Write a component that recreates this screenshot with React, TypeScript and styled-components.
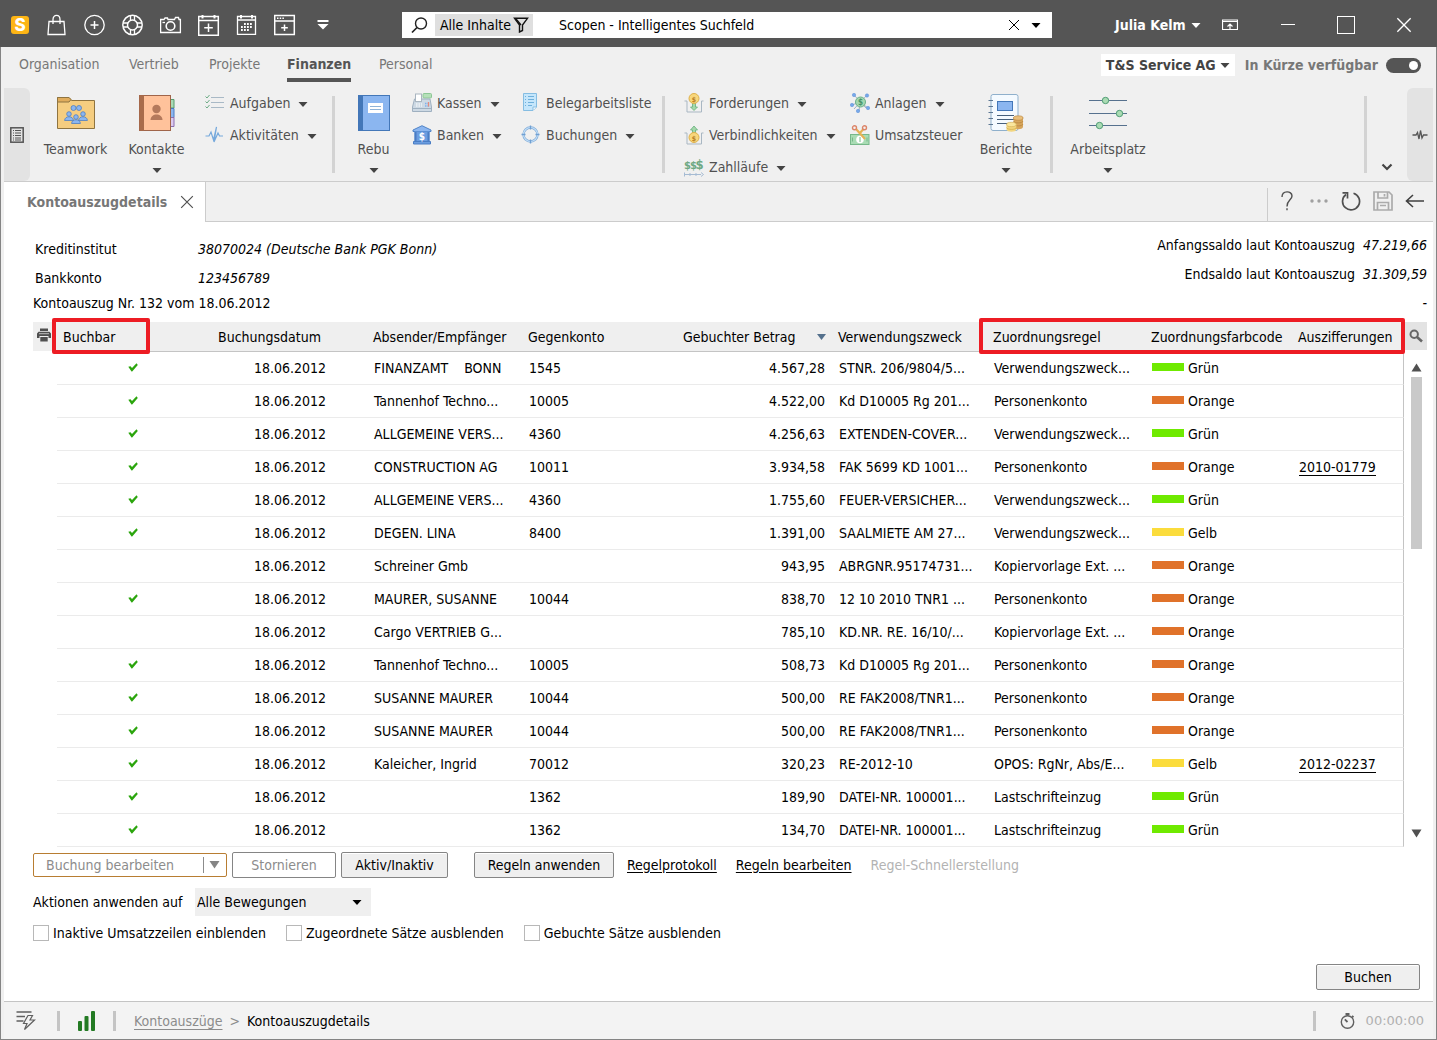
import React from "react";
import styled, { createGlobalStyle } from "styled-components";

const GlobalStyle = createGlobalStyle`
  *, *::before, *::after { box-sizing: border-box; }
  body {
    margin: 0;
    font-family: "DejaVu Sans Condensed", "Noto Sans", sans-serif;
    font-size: 14px;
    line-height: 20px;
    color: #000;
    background: #fff;
  }
  button, input, select { font: inherit; color: inherit; }
  button { padding: 0; border: 0; background: none; cursor: pointer; white-space: nowrap; }
  svg { display: block; flex: none; }
`;

/* ---------- window ---------- */

const Window = styled.div`
  min-height: 100vh;
  display: flex;
  flex-direction: column;
`;

const Frame = styled.div`
  flex: 1;
  display: flex;
  flex-direction: column;
  padding: 0 3px;
  border: 1px solid #848484;
  border-top: 0;
  background: #f0f0f0;
`;

const TitleBar = styled.header`
  display: flex;
  align-items: center;
  height: 47px;
  background: #555;
  color: #fff;
`;

const QuickAccess = styled.div`
  display: flex;
  margin-right: 60px;
`;

const QuickButton = styled.button`
  width: 38px;
  height: 47px;
  display: flex;
  align-items: center;
  justify-content: center;
  padding-top: 3px;
`;

const Logo = styled.span`
  width: 18px;
  height: 18px;
  margin-left: 2px;
  border-radius: 3px;
  background: #fdb515;
  font: 800 17px/18px Inter, sans-serif;
  text-align: center;
  color: #fff;
`;

const SearchBox = styled.div`
  flex: 1;
  min-width: 0;
  height: 26px;
  margin-top: 3px;
  padding: 0 5px 0 9px;
  display: flex;
  align-items: center;
  background: #fff;
  color: #000;
`;

const ScopeButton = styled.button`
  width: 98px;
  height: 22px;
  margin: 0 26px 0 6px;
  padding: 0 4px 0 5px;
  display: flex;
  align-items: center;
  justify-content: space-between;
  background: #dfdfdf;
`;

const SearchInput = styled.input`
  flex: 1;
  min-width: 0;
  height: 22px;
  padding: 0;
  border: 0;
  outline: 0;
  background: transparent;
`;

const SmallButton = styled.button`
  width: 22px;
  height: 22px;
  display: flex;
  align-items: center;
  justify-content: center;
`;

const TitleRight = styled.div`
  display: flex;
  align-items: center;
  width: 385px;
  padding-top: 3px;
`;

const UserButton = styled.button`
  width: 86px;
  margin-left: 63px;
  display: flex;
  align-items: center;
  justify-content: space-between;
  font-weight: 600;
`;

const WindowButton = styled.button`
  width: 58px;
  height: 40px;
  display: flex;
  align-items: center;
  justify-content: center;
`;

/* ---------- module tabs ---------- */

const ModuleBar = styled.nav`
  display: flex;
  align-items: flex-start;
  height: 41px;
  padding: 7px 12px 0 15px;
`;

const ModuleLink = styled.a<{ $active?: boolean; $width: number }>`
  width: ${(p) => p.$width}px;
  color: ${(p) => (p.$active ? "#555" : "#777")};
  font-weight: ${(p) => (p.$active ? 700 : 400)};
  text-decoration: none;
  white-space: nowrap;
  span {
    display: inline-block;
    padding-bottom: 4px;
    border-bottom: 4px solid ${(p) => (p.$active ? "#555" : "transparent")};
  }
`;

const ModuleRight = styled.div`
  display: flex;
  align-items: center;
  margin-left: auto;
  font-weight: 600;
  color: #777;
`;

const CompanyButton = styled.button`
  width: 134px;
  height: 22px;
  margin-right: 10px;
  padding: 0 5px;
  display: flex;
  align-items: center;
  justify-content: space-between;
  background: #fff;
  color: #444;
  font-weight: 600;
`;

const SwitchLabel = styled.label`
  display: flex;
  align-items: center;
  gap: 8px;
`;

const Switch = styled.input`
  appearance: none;
  width: 35px;
  height: 15px;
  margin: 0;
  padding: 3px;
  border-radius: 8px;
  background: #555;
  display: flex;
  justify-content: flex-end;
  &::before {
    content: "";
    width: 9px;
    height: 9px;
    border-radius: 50%;
    background: #fff;
  }
`;

/* ---------- ribbon ---------- */

const Ribbon = styled.div`
  display: flex;
  height: 94px;
  border-bottom: 1px solid #ccc;
  color: #505050;
`;

const SidePanel = styled.button<{ $side: "left" | "right" }>`
  width: 26px;
  display: flex;
  align-items: center;
  justify-content: center;
  border-radius: ${(p) => (p.$side === "left" ? "0 6px 6px 0" : "6px 0 0 6px")};
  background: #e3e3e3;
`;

const Tile = styled.button<{ $width: number }>`
  width: ${(p) => p.$width}px;
  padding-top: 6px;
  display: flex;
  flex-direction: column;
  align-items: center;
  span { margin: 7px 0 9px; }
`;

const Column = styled.div<{ $width: number }>`
  width: ${(p) => p.$width}px;
  padding-top: 1px;
  display: flex;
  flex-direction: column;
  gap: 4px;
`;

const Command = styled.button`
  height: 28px;
  display: flex;
  align-items: center;
  text-align: left;
  svg:first-child { margin-right: 5px; }
  span + svg { margin: 2px 0 0 8px; }
`;

const Divider = styled.div`
  width: 3px;
  height: 77px;
  margin-top: 8px;
  background: #d3d3d3;
`;

const Gap = styled.div<{ $width?: number }>`
  ${(p) => (p.$width ? `width: ${p.$width}px;` : "flex: 1;")}
`;

const CollapseButton = styled.button`
  width: 40px;
  display: flex;
  justify-content: center;
  align-items: flex-end;
  padding-bottom: 10px;
`;

/* ---------- page tab row ---------- */

const PageBar = styled.div`
  display: flex;
  height: 40px;
`;

const PageTab = styled.div`
  width: 202px;
  padding: 0 11px 0 23px;
  display: flex;
  align-items: center;
  justify-content: space-between;
  border-right: 1px solid #ccc;
  background: #fff;
  font-weight: 600;
  color: #777;
`;

const PageTools = styled.div`
  flex: 1;
  display: flex;
  justify-content: flex-end;
  align-items: flex-end;
  border-bottom: 1px solid #ccc;
`;

const ToolGroup = styled.div`
  display: flex;
  align-items: center;
  height: 33px;
  padding: 0 2px 0 3px;
  border-left: 1px solid #ccc;
`;

const ToolButton = styled.button`
  width: 32px;
  height: 32px;
  display: flex;
  align-items: center;
  justify-content: center;
  padding-bottom: 8px;
`;

/* ---------- content ---------- */

const Content = styled.main`
  flex: 1;
  display: flex;
  flex-direction: column;
  padding: 13px 6px 11px 29px;
  background: #fff;
`;

const Summary = styled.div`
  display: flex;
  justify-content: space-between;
  height: 87px;
`;

const Facts = styled.dl`
  margin: 4px 0 0;
  display: grid;
  grid-template-columns: 163px auto;
  grid-auto-rows: 20px;
  row-gap: 9px;
  padding-left: 2px;
  dd { margin: 0; font-style: italic; }
`;

const StatementTitle = styled.p`
  margin: 5px 0 0;
`;

const Balances = styled.dl`
  margin: 0;
  display: grid;
  grid-template-columns: auto auto;
  column-gap: 8px;
  row-gap: 9px;
  grid-auto-rows: 20px;
  text-align: right;
  dd { margin: 0; font-style: italic; }
`;

const GridArea = styled.div`
  position: relative;
  display: flex;
`;

const Table = styled.table`
  flex: 1;
  min-width: 0;
  width: 100%;
  table-layout: fixed;
  border-collapse: separate;
  border-spacing: 0;
`;

const Th = styled.th<{ $align?: "right" | "center"; $end?: number }>`
  height: 30px;
  padding: 0 ${(p) => p.$end ?? 0}px 0 ${(p) => (p.$align ? 0 : 6)}px;
  border-bottom: 1px solid #c4c4c4;
  background: #efefef;
  font-weight: 400;
  text-align: ${(p) => p.$align ?? "left"};
  white-space: nowrap;
`;

const PrintTh = styled(Th)`
  border-color: #fff;
  svg { margin: 2px auto 0; }
`;

const SortHeader = styled.button`
  width: 100%;
  display: flex;
  align-items: center;
  justify-content: space-between;
  padding: 0 6px;
`;

const Row = styled.tr`
  td { border-bottom: 1px solid #ebebeb; }
  td:first-child { border-color: #fff; }
  td:last-child { border-right: 1px solid #c4c4c4; }
`;

const Td = styled.td<{ $align?: "right" | "center"; $end?: number }>`
  height: 33px;
  padding: 0 ${(p) => p.$end ?? 0}px 0 ${(p) => (p.$align ? 0 : 7)}px;
  overflow: hidden;
  text-align: ${(p) => p.$align ?? "left"};
  white-space: pre;
  svg { margin: 0 auto; }
`;

const Swatch = styled.span<{ $color: string }>`
  display: inline-block;
  width: 32px;
  height: 8px;
  margin-right: 4px;
  vertical-align: 2px;
  background: ${(p) => p.$color};
`;

const CellLink = styled.a`
  color: #000;
  text-decoration: none;
  border-bottom: 1px solid #000;
`;

const ScrollColumn = styled.div`
  width: 23px;
  display: flex;
  flex-direction: column;
  align-items: flex-end;
`;

const GridSearch = styled.button`
  width: 22px;
  height: 28px;
  display: flex;
  align-items: center;
  justify-content: center;
  background: #e3e3e3;
`;

const ScrollTrack = styled.div`
  flex: 1;
  width: 11px;
  margin-right: 5px;
  display: flex;
  flex-direction: column;
  padding: 13px 0 9px;
`;

const Thumb = styled.div`
  height: 172px;
  margin: 5px 0 auto;
  background: #c9c9c9;
`;

const Marker = styled.div<{ $side: "left" | "right" }>`
  position: absolute;
  top: -4px;
  height: 36px;
  ${(p) => (p.$side === "left" ? "left: 19px; width: 98px;" : "right: 22px; width: 426px;")}
  border: 4px solid #ed1c24;
  border-radius: 2px;
  pointer-events: none;
`;

/* ---------- actions ---------- */

const Actions = styled.div`
  display: flex;
  align-items: center;
  margin-top: 5px;
`;

const Button = styled.button<{ $width: number; $gap?: number }>`
  width: ${(p) => p.$width}px;
  height: 26px;
  margin-right: ${(p) => p.$gap ?? 5}px;
  border: 1px solid #858585;
  border-radius: 2px;
  background: #efefef;
  box-shadow: inset 0 1px #fff;
  &:disabled { background: #fff; color: #8c8c8c; }
`;

const SplitButton = styled(Button)`
  height: 24px;
  display: flex;
  align-items: center;
  justify-content: space-between;
  padding: 0 6px 0 12px;
  border-color: #b87d32;
  box-shadow: none;
  span:last-child {
    display: flex;
    align-items: center;
    height: 16px;
    padding-left: 5px;
    border-left: 1px solid #8c8c8c;
  }
`;

const ActionLink = styled.a<{ $disabled?: boolean }>`
  margin-right: 19px;
  color: ${(p) => (p.$disabled ? "#b3b3b3" : "#000")};
  text-decoration: ${(p) => (p.$disabled ? "none" : "underline")};
  text-underline-offset: 2px;
`;

const ScopeRow = styled.div`
  display: flex;
  align-items: center;
  margin-top: 10px;
  label { width: 162px; }
`;

const SelectBox = styled.div`
  display: flex;
  align-items: center;
  width: 176px;
  height: 28px;
  padding-right: 9px;
  background: #efefef;
`;

const Select = styled.select`
  appearance: none;
  flex: 1;
  height: 28px;
  padding: 0 2px;
  border: 0;
  background: transparent;
`;

const Checks = styled.div`
  display: flex;
  gap: 20px;
  margin-top: 7px;
`;

const CheckLabel = styled.label`
  display: flex;
  align-items: center;
  gap: 4px;
`;

const CheckBox = styled.input`
  appearance: none;
  width: 16px;
  height: 16px;
  margin: 0;
  border: 1px solid #b8b8b8;
  background: #fff;
`;

const SubmitRow = styled.div`
  display: flex;
  justify-content: flex-end;
  margin-top: auto;
  padding-right: 2px;
`;

/* ---------- status bar ---------- */

const StatusBar = styled.footer`
  display: flex;
  align-items: center;
  height: 38px;
  padding: 0 9px 0 12px;
  border-top: 1px solid #c4c4c4;
  background: #f3f3f3;
`;

const StatusDivider = styled.div<{ $space: number }>`
  width: 3px;
  height: 20px;
  margin: 0 ${(p) => p.$space}px;
  background: #c4c4c4;
`;

const Crumbs = styled.nav`
  display: flex;
  gap: 7px;
  color: #8c8c8c;
  a { color: #8c8c8c; text-decoration: underline; text-underline-offset: 3px; }
`;

const CurrentCrumb = styled.span`
  color: #000;
`;

const Clock = styled.span`
  margin-left: 10px;
  font: 13px/20px "DejaVu Sans", sans-serif;
  color: #b0b0b0;
`;

/* ---------- drawings ---------- */

const Caret = ({ color = "#444" }: { color?: string }) => (
  <svg width="10" height="5" viewBox="0 0 10 5">
    <path d="M0.5 0H9.5L5 5Z" fill={color} />
  </svg>
);

const Cross = ({ size = 12, color = "#000" }: { size?: number; color?: string }) => (
  <svg width={size} height={size} viewBox="0 0 12 12">
    <path d="M1 1L11 11M11 1L1 11" stroke={color} strokeWidth="1" fill="none" />
  </svg>
);

const White = ({ children }: { children: React.ReactNode }) => (
  <svg width="22" height="22" viewBox="0 0 22 22" fill="none" stroke="#fff" strokeWidth="1.3">
    {children}
  </svg>
);

const BagIcon = () => (
  <White>
    <path d="M3 7.5H18L19 20.5H2Z M7 10V5.5C7 0 14 0 14 5.5V10" />
  </White>
);
const AddIcon = () => (
  <White>
    <circle cx="10.5" cy="11" r="9.7" />
    <path d="M10.5 7V15M6.5 11H14.5" strokeWidth="1.5" />
  </White>
);
const RingIcon = () => (
  <White>
    <circle cx="10.5" cy="11" r="9.7" strokeWidth="1.5" />
    <circle cx="10.5" cy="11" r="5" strokeWidth="1.5" />
    <path d="M8.5 1.5V6.5M12.5 1.5V6.5M8.5 15.5V20.5M12.5 15.5V20.5M1 9H6M1 13H6M15 9H20M15 13H20" />
  </White>
);
const CameraIcon = () => (
  <White>
    <path d="M0.6 5.5H4L5 4H7.5L8 5.5H14.5L15.5 3.5H18.5L19 5.5H20.4V18.5H0.6Z" />
    <circle cx="10.5" cy="12" r="4.3" strokeWidth="1.6" />
    <path d="M2.5 8.5H5" />
  </White>
);
const CalendarAddIcon = () => (
  <White>
    <path d="M0.7 2.5H20.3V21.3H0.7ZM0.7 6.5H20.3M10.5 9.5V18M6.2 13.7H14.8" strokeWidth="1.5" />
    <path d="M4.5 1V4.5M16.5 1V4.5" strokeWidth="2" />
  </White>
);
const CalendarIcon = () => (
  <White>
    <path d="M1.5 2.5H19.5V20.3H1.5ZM1.5 6H19.5" />
    <path d="M5 1V4.5M16 1V4.5" strokeWidth="2" />
    <path d="M8 10H17M5 13H17M5 16H14" strokeWidth="1.8" strokeDasharray="1.8 1.2" />
  </White>
);
const WindowAddIcon = () => (
  <White>
    <path d="M0.7 1.6H20.3V20.4H0.7ZM0.7 7H20.3M10.5 10.5V17M7.2 13.7H13.8" strokeWidth="1.5" />
    <path d="M3 4.3H10" strokeWidth="1.5" strokeDasharray="1.5 1.2" />
  </White>
);
const MoreIcon = () => (
  <svg width="12" height="10" viewBox="0 0 12 10" fill="#fff">
    <path d="M0.5 0H11.5V2H0.5ZM0.5 4H11.5L6 9.5Z" />
  </svg>
);
const SearchIcon = () => (
  <svg width="18" height="18" viewBox="0 0 18 18" fill="none" stroke="#222" strokeWidth="1.4">
    <circle cx="10" cy="7.5" r="5.5" />
    <path d="M6 11.5L1 16.5" strokeWidth="1.7" />
  </svg>
);
const FunnelIcon = () => (
  <svg width="16" height="16" viewBox="0 0 16 16" fill="none" stroke="#111" strokeWidth="1.4">
    <path d="M1.5 1.3H14.5L9.5 8V13.5L6.5 15V8Z" />
    <path d="M3 2L8 8" />
  </svg>
);
const PinIcon = () => (
  <svg width="16" height="12" viewBox="0 0 16 12" fill="none" stroke="#fff">
    <path d="M0.5 1H15.5V10.5H0.5ZM0.5 2.5H15.5M8 10V5M5.5 7.5L8 5L10.5 7.5" strokeWidth="1.2" />
  </svg>
);
const ListPanelIcon = () => (
  <svg width="14" height="16" viewBox="0 0 14 16" fill="none" stroke="#555">
    <rect x="0.8" y="0.8" width="12.4" height="14.4" strokeWidth="1.5" />
    <path d="M3 3.5H4M5 3.5H11M3 6H4M5 6H11M3 8.5H4M5 8.5H11M3 11H4M5 11H11M3 13H4M5 13H11" />
  </svg>
);
const PulseSmall = () => (
  <svg width="16" height="12" viewBox="0 0 16 12" fill="none" stroke="#555" strokeWidth="1.3">
    <path d="M0.5 6H4L5.5 3.5L7 10L8.5 1.5L10 9L11.5 6H15.5" />
  </svg>
);
const ChevronIcon = () => (
  <svg width="12" height="8" viewBox="0 0 12 8" fill="none" stroke="#444" strokeWidth="2.2">
    <path d="M1.5 1.5L6 6L10.5 1.5" />
  </svg>
);

const Person = ({ x, y }: { x: number; y: number }) => (
  <g transform={`translate(${x} ${y})`} fill="#8bb6f0" stroke="#4f7fc0" strokeWidth=".8">
    <path d="M-4.4 6.5C-4.4 1.5 4.4 1.5 4.4 6.5Z" />
    <circle r="2.3" />
  </g>
);
const TeamIcon = () => (
  <svg width="38" height="38" viewBox="0 0 38 38">
    <path d="M0.5 34.5V3.5H12L14.5 6.5H37.5V34.5Z" fill="#f5cd80" stroke="#8f7440" />
    <path d="M0.5 8V3.5H12L14 5.5L12 8Z" fill="#e0ac5c" stroke="#8f7440" />
    <circle cx="16.5" cy="14" r="2.5" fill="#8bb6f0" stroke="#4f7fc0" strokeWidth=".8" />
    <circle cx="22" cy="14" r="2.5" fill="#8bb6f0" stroke="#4f7fc0" strokeWidth=".8" />
    <Person x={12} y={20} />
    <Person x={26} y={20} />
    <Person x={19} y={23} />
  </svg>
);
const ContactsIcon = () => (
  <svg width="36" height="38" viewBox="0 0 36 38">
    <path d="M31.5 5.5H35V14H31.5Z" fill="#a9dbb5" stroke="#579a6d" />
    <path d="M31.5 14.5H35V23.5H31.5Z" fill="#8bb6f0" stroke="#4a7ac0" />
    <path d="M31.5 23.5H35V32.5H31.5Z" fill="#dccaf0" stroke="#8a6fb0" />
    <rect x="0.5" y="1.5" width="31" height="35" fill="#ffc29b" stroke="#a0654a" />
    <rect x="0.5" y="1.5" width="4.5" height="35" fill="#a96c4b" />
    <circle cx="17.5" cy="15" r="4.2" fill="#b4795c" />
    <path d="M11.5 26C11.5 18.5 23.5 18.5 23.5 26Z" fill="#b4795c" />
  </svg>
);
const BookIcon = () => (
  <svg width="32" height="38" viewBox="0 0 32 38">
    <rect x="0.5" y="1.5" width="31" height="35" fill="#8bb6f0" stroke="#4377b8" />
    <rect x="0.5" y="1.5" width="4.5" height="35" fill="#4377b8" />
    <rect x="10" y="9" width="15" height="10" fill="#fff" />
    <path d="M12 12.5H23M12 15.5H23" stroke="#8fb3d8" />
  </svg>
);
const ReportIcon = () => (
  <svg width="36" height="38" viewBox="0 1 36 38">
    <rect x="3" y="1.5" width="27" height="36" rx="2" fill="#f4faff" stroke="#8fb0cc" />
    <path d="M0.5 7.5H5M0.5 13.5H5M0.5 19.5H5M0.5 25.5H5M0.5 31.5H5" stroke="#5d7894" />
    <rect x="9.5" y="8.5" width="15" height="9" fill="#8bb6f0" stroke="#4377b8" />
    <path d="M9 22.5H26M9 26.5H26M9 30.5H20" stroke="#46607c" />
    <path d="M25.5 24V34C26 37 34.5 37 35 34V24Z" fill="#d6a55c" />
    <ellipse cx="30.3" cy="25" rx="4.8" ry="2.2" fill="#e9bf7b" stroke="#b5823c" strokeWidth=".6" />
    <path d="M25.5 28C26 30.5 34.5 30.5 35 28M25.5 31C26 33.5 34.5 33.5 35 31" stroke="#b5823c" fill="none" strokeWidth=".7" />
    <path d="M18.5 31V36.5C19 39.5 28 39.5 28.3 36.5V31Z" fill="#f3d67e" />
    <ellipse cx="23.4" cy="31.5" rx="4.8" ry="2.2" fill="#fae69c" stroke="#d0aa4c" strokeWidth=".6" />
    <path d="M18.5 34.5C19 37 28 37 28.3 34.5" stroke="#d0aa4c" fill="none" strokeWidth=".7" />
  </svg>
);
const SlidersIcon = () => (
  <svg width="38" height="38" viewBox="0 0 38 38" fill="#aadbb3" stroke="#4f9c74">
    <path d="M0 6.5H38M0 19.5H38M0 31.5H38" stroke="#56718e" />
    <circle cx="16.5" cy="6.5" r="3.2" />
    <circle cx="30.5" cy="19.5" r="3.2" />
    <circle cx="10.5" cy="31.5" r="3.2" />
  </svg>
);

const Small = ({ children }: { children: React.ReactNode }) => (
  <svg width="20" height="20" viewBox="0 0 20 20" fill="none">
    {children}
  </svg>
);
const TasksIcon = () => (
  <Small>
    <path d="M6 4.5H19M6 9.5H19M6 14.5H19" stroke="#a9b9c6" />
    <path d="M0.5 3.5L2 5L4.5 2M0.5 8.5L2 10L4.5 7M0.5 13.5L2 15L4.5 12" stroke="#6cab85" />
  </Small>
);
const ActivityIcon = () => (
  <Small>
    <path d="M0.5 11H4L6 7L8.5 15L11.5 2L9 17L13 8L14.5 11H18" stroke="#76a9dc" strokeWidth="1.2" />
  </Small>
);
const CashIcon = () => (
  <Small>
    <rect x="11" y="0.5" width="8.5" height="4.5" rx="1" fill="#b5e0b8" stroke="#8cc796" />
    <path d="M2.5 6H18L19.5 14V18.5H0.5V14Z" fill="#cdd9e4" stroke="#9fb0c0" />
    <rect x="3.5" y="1" width="6" height="7.5" fill="#fff" stroke="#a9b5c0" />
    <path d="M4 11H10M4 13H10" stroke="#fff" strokeDasharray="1.5 1" />
    <path d="M13 10.5H17M13 13H17" stroke="#7db1ee" strokeWidth="1.6" strokeDasharray="1.5 1" />
    <path d="M16.5 9V13.5" stroke="#e58a7c" strokeWidth="1.3" />
    <path d="M0.5 15.5H19.5" stroke="#9fb0c0" />
  </Small>
);
const BankIcon = () => (
  <Small>
    <path d="M1 5L10 0.7L19 5V6.5H1Z" fill="#8bb6f0" stroke="#4f83c7" />
    <path d="M2.5 6.5H17.5V16.5H2.5Z" fill="#6b9de0" />
    <path d="M3.5 7V16.5M16.5 7V16.5" stroke="#4a7dc4" strokeWidth="2" />
    <path d="M1.5 16.5H18.5V19H1.5Z" fill="#6b9de0" stroke="#4a7dc4" />
    <text x="10" y="15" fontSize="10" fontWeight="700" textAnchor="middle" fill="#fff">$</text>
  </Small>
);
const ReceiptIcon = () => (
  <Small>
    <path d="M2.5 0.5H15.5V14L12 17.5H2.5Z" fill="#c5e6fb" stroke="#85bde2" />
    <path d="M4 3.5H5M7 3.5H13M4 6.5H5M7 6.5H13M4 9.5H5M7 9.5H13M4 12.5H5M7 12.5H11" stroke="#6fb0dc" />
    <path d="M12 17V14H15.5" fill="#fff" stroke="#85bde2" />
  </Small>
);
const TargetIcon = () => (
  <Small>
    <circle cx="9.5" cy="9.5" r="7" stroke="#7fabd8" strokeWidth="2.4" />
    <circle cx="9.5" cy="9.5" r="7" stroke="#c9e3fa" strokeWidth="1.1" />
    <path d="M9.5 0.5V4.5M9.5 14.5V18.5M0.5 9.5H4.5M14.5 9.5H18.5" stroke="#6f9fd2" strokeWidth="1.3" />
  </Small>
);
const Coin = ({ y }: { y: number }) => (
  <>
    <circle cx="10" cy={y} r="5" fill="#f8d77c" stroke="#deb04a" />
    <text x="10" y={y + 3} fontSize="7" fontWeight="700" textAnchor="middle" fill="#b98128">$</text>
  </>
);
const Tray = () => <path d="M0.5 8H3V19H17.5V8H19.5" stroke="#a9b7c3" />;
const ReceivableIcon = () => (
  <Small>
    <Tray />
    <path d="M8.5 9H11.5V14H13.5L10 17.5L6.5 14H8.5Z" fill="#a4d9ab" stroke="#66ad7b" strokeWidth=".8" />
    <Coin y={5.5} />
  </Small>
);
const PayableIcon = () => (
  <Small>
    <Tray />
    <path d="M8.5 9V5H6.5L10 1L13.5 5H11.5V9Z" fill="#a4d9ab" stroke="#66ad7b" strokeWidth=".8" />
    <Coin y={12.5} />
  </Small>
);
const PaymentRunIcon = () => (
  <Small>
    <g fill="#6fa984" fontWeight="700" textAnchor="middle">
      <text x="3.5" y="12" fontSize="11">$</text>
      <text x="9.5" y="12" fontSize="11">$</text>
      <text x="15.5" y="12" fontSize="13">$</text>
    </g>
    <path d="M0 17.5H17M0.5 15.5V19.5M6 16V19M12 16V19M17 15.5L19.5 17.5L17 19.5" stroke="#a5bbd3" />
  </Small>
);
const AssetsIcon = () => (
  <Small>
    <path d="M4 2L16 15M17 2L4 16M10 9L9 18M2 12L10 9L18 15" stroke="#8ba1b6" strokeWidth=".8" />
    <circle cx="10.5" cy="9" r="5" fill="#a4d9b0" stroke="#6bb088" />
    <g fill="#76a8ea" stroke="#5d8fd6" strokeWidth=".5">
      <circle cx="4" cy="2" r="1.7" />
      <circle cx="17" cy="2.5" r="1.7" />
      <circle cx="2" cy="12" r="1.7" />
      <circle cx="8" cy="18" r="1.7" />
      <circle cx="18" cy="15" r="1.7" />
    </g>
    <text x="10.5" y="12" fontSize="8" fontWeight="700" textAnchor="middle" fill="#47936b">$</text>
  </Small>
);
const TaxIcon = () => (
  <Small>
    <rect x="0.5" y="9.5" width="18.5" height="10" fill="#a9dcb4" stroke="#77b88a" />
    <circle cx="10" cy="14.5" r="3.8" fill="#fff" />
    <path d="M2.5 12.5V16.5M17 12.5V16.5M10 12V17" stroke="#77b88a" />
    <path d="M6 4L15 14M13.5 4L9 9" stroke="#e6b254" strokeWidth="2.2" />
    <circle cx="4.5" cy="2.8" r="2" stroke="#dc8468" strokeWidth="1.4" />
    <circle cx="14.5" cy="2.8" r="2" stroke="#dc8468" strokeWidth="1.4" />
  </Small>
);

const HelpIcon = () => (
  <svg width="12" height="20" viewBox="0 0 12 20" fill="none" stroke="#505050" strokeWidth="1.4">
    <path d="M1 6C1 -0.8 11 -0.6 11 5C11 9 6 9 6 15.5M6 17.2V19.2" />
  </svg>
);
const DotsIcon = () => (
  <svg width="18" height="4" viewBox="0 0 18 4" fill="#a0a0a0">
    <circle cx="2" cy="2" r="1.7" />
    <circle cx="9" cy="2" r="1.7" />
    <circle cx="16" cy="2" r="1.7" />
  </svg>
);
const ReloadIcon = () => (
  <svg width="20" height="20" viewBox="0 0 20 20" fill="none" stroke="#505050" strokeWidth="1.7">
    <path d="M12.5 2.2A8.5 8.5 0 1 1 5 3.5" />
    <path d="M1.5 1.8H6.5V7.5" />
  </svg>
);
const SaveIcon = () => (
  <svg width="20" height="20" viewBox="0 0 20 20" fill="none" stroke="#ababab" strokeWidth="1.7">
    <path d="M1 1H16L19 4V19H1ZM5 1V7H14.5V1M4.5 19V11.5H15.5V19M11.5 3V5.5M7 14.5H13" />
  </svg>
);
const BackIcon = () => (
  <svg width="20" height="14" viewBox="0 0 20 14" fill="none" stroke="#404040" strokeWidth="1.6">
    <path d="M8 1L1.5 7L8 13M1.5 7H19" />
  </svg>
);
const PrintIcon = () => (
  <svg width="14" height="14" viewBox="0 0 14 14" fill="#505050">
    <path d="M3 0.5H11V3H3ZM1.5 3.7H12.5L14 5.5V10H11.5V8H2.5V10H0V5.5ZM3.3 9H10.7V13.5H3.3Z" />
    <path d="M2 5.7H12" stroke="#bbb" />
  </svg>
);
const LensIcon = () => (
  <svg width="14" height="14" viewBox="0 0 14 14" fill="none" stroke="#666">
    <circle cx="5.2" cy="5.2" r="3.7" strokeWidth="2" />
    <path d="M8 8L13 12.5" strokeWidth="2.6" />
  </svg>
);
const Check = () => (
  <svg width="10" height="10" viewBox="0 0 10 10">
    <path d="M0.3 3.8L2.5 3.2L4 5L8.5 0.3L9.8 2L4.2 8.5H3.5Z" fill="#2ba50d" />
  </svg>
);
const ScrollArrow = ({ down }: { down?: boolean }) => (
  <svg width="11" height="9" viewBox="0 0 11 9">
    <path d={down ? "M0.5 0.5H10.5L5.5 8.5Z" : "M0.5 8.5H10.5L5.5 0.5Z"} fill="#505050" />
  </svg>
);
const SplitArrow = () => (
  <svg width="11" height="8" viewBox="0 0 11 8">
    <path d="M0.5 0H10.5L5.5 7.5Z" fill="#858585" />
  </svg>
);
const BoltIcon = () => (
  <svg width="23" height="20" viewBox="0 0 23 20" fill="none" stroke="#606060" strokeWidth="1.2">
    <path d="M0.5 1H15.5M0.5 5.5H9M0.5 10H7.5" strokeWidth="1.5" />
    <path d="M12 4.5H16.5L14 9H18.5L8.5 18.5L11 12.5H7.5Z" />
  </svg>
);
const SignalIcon = () => (
  <svg width="17" height="20" viewBox="0 0 17 20" fill="#237a23">
    <rect x="0" y="10" width="4" height="10" rx="1" />
    <rect x="6.5" y="5" width="4" height="15" rx="1" />
    <rect x="13" y="0" width="4" height="20" rx="1" />
  </svg>
);
const StopwatchIcon = () => (
  <svg width="16" height="16" viewBox="0 0 16 16" fill="none" stroke="#606060" strokeWidth="1.4">
    <circle cx="7.5" cy="9" r="6.2" />
    <path d="M5.5 1H9.5M7.5 1V3M12 3L13.5 4.2M7.5 9L4.8 6.3" strokeWidth="1.8" />
  </svg>
);

/* ---------- data ---------- */

const COLORS: Record<string, string> = { Grün: "#6fea00", Orange: "#e0722a", Gelb: "#fbdc3c" };

type Entry = [boolean, string, string, string, string, string, string, string?];

const ENTRIES: Entry[] = [
  [true, "FINANZAMT    BONN", "1545", "4.567,28", "STNR. 206/9804/5...", "Verwendungszweck...", "Grün"],
  [true, "Tannenhof Techno...", "10005", "4.522,00", "Kd D10005 Rg 201...", "Personenkonto", "Orange"],
  [true, "ALLGEMEINE VERS...", "4360", "4.256,63", "EXTENDEN-COVER...", "Verwendungszweck...", "Grün"],
  [true, "CONSTRUCTION AG", "10011", "3.934,58", "FAK 5699 KD 1001...", "Personenkonto", "Orange", "2010-01779"],
  [true, "ALLGEMEINE VERS...", "4360", "1.755,60", "FEUER-VERSICHER...", "Verwendungszweck...", "Grün"],
  [true, "DEGEN. LINA", "8400", "1.391,00", "SAALMIETE AM 27...", "Verwendungszweck...", "Gelb"],
  [false, "Schreiner Gmb", "", "943,95", "ABRGNR.95174731...", "Kopiervorlage Ext. ...", "Orange"],
  [true, "MAURER, SUSANNE", "10044", "838,70", "12 10 2010 TNR1 ...", "Personenkonto", "Orange"],
  [false, "Cargo VERTRIEB G...", "", "785,10", "KD.NR. RE. 16/10/...", "Kopiervorlage Ext. ...", "Orange"],
  [true, "Tannenhof Techno...", "10005", "508,73", "Kd D10005 Rg 201...", "Personenkonto", "Orange"],
  [true, "SUSANNE MAURER", "10044", "500,00", "RE FAK2008/TNR1...", "Personenkonto", "Orange"],
  [true, "SUSANNE MAURER", "10044", "500,00", "RE FAK2008/TNR1...", "Personenkonto", "Orange"],
  [true, "Kaleicher, Ingrid", "70012", "320,23", "RE-2012-10", "OPOS: RgNr, Abs/E...", "Gelb", "2012-02237"],
  [true, "", "1362", "189,90", "DATEI-NR. 100001...", "Lastschrifteinzug", "Grün"],
  [true, "", "1362", "134,70", "DATEI-NR. 100001...", "Lastschrifteinzug", "Grün"],
];

const COLUMN_WIDTHS = [24, 155, 155, 155, 155, 155, 155, 158, 147, 112];

const Cmd = ({ icon, label, menu }: { icon: React.ReactNode; label: string; menu?: boolean }) => (
  <Command type="button">
    {icon}
    <span>{label}</span>
    {menu && <Caret />}
  </Command>
);

const Big = ({ icon, label, width, menu }: { icon: React.ReactNode; label: string; width: number; menu?: boolean }) => (
  <Tile type="button" $width={width}>
    {icon}
    <span>{label}</span>
    {menu && <Caret />}
  </Tile>
);

const QUICK: [string, React.ReactNode][] = [
  ["Start", <Logo>S</Logo>],
  ["Einkauf", <BagIcon />],
  ["Neu", <AddIcon />],
  ["Hilfe", <RingIcon />],
  ["Kamera", <CameraIcon />],
  ["Neuer Termin", <CalendarAddIcon />],
  ["Kalender", <CalendarIcon />],
  ["Neues Fenster", <WindowAddIcon />],
  ["Mehr", <MoreIcon />],
];

export default function App() {
  return (
    <Window>
      <GlobalStyle />
      <TitleBar>
        <QuickAccess>
          {QUICK.map(([label, icon]) => (
            <QuickButton key={label} type="button" aria-label={label}>{icon}</QuickButton>
          ))}
        </QuickAccess>
        <SearchBox>
          <SearchIcon />
          <ScopeButton type="button">Alle Inhalte<FunnelIcon /></ScopeButton>
          <SearchInput aria-label="Suche" defaultValue="Scopen - Intelligentes Suchfeld" />
          <SmallButton type="button" aria-label="Leeren"><Cross /></SmallButton>
          <SmallButton type="button" aria-label="Suchoptionen"><Caret color="#000" /></SmallButton>
        </SearchBox>
        <TitleRight>
          <UserButton type="button">Julia Kelm<Caret color="#fff" /></UserButton>
          <WindowButton type="button" aria-label="Anheften"><PinIcon /></WindowButton>
          <WindowButton type="button" aria-label="Minimieren">
            <svg width="14" height="2"><path d="M0 0.5H14" stroke="#fff" /></svg>
          </WindowButton>
          <WindowButton type="button" aria-label="Maximieren">
            <svg width="18" height="18"><rect x="0.5" y="0.5" width="17" height="17" fill="none" stroke="#fff" /></svg>
          </WindowButton>
          <WindowButton type="button" aria-label="Schließen"><Cross size={16} color="#fff" /></WindowButton>
        </TitleRight>
      </TitleBar>

      <Frame>
        <ModuleBar>
          <ModuleLink href="#organisation" $width={110}><span>Organisation</span></ModuleLink>
          <ModuleLink href="#vertrieb" $width={80}><span>Vertrieb</span></ModuleLink>
          <ModuleLink href="#projekte" $width={78}><span>Projekte</span></ModuleLink>
          <ModuleLink href="#finanzen" $width={92} $active><span>Finanzen</span></ModuleLink>
          <ModuleLink href="#personal" $width={60}><span>Personal</span></ModuleLink>
          <ModuleRight>
            <CompanyButton type="button">T&amp;S Service AG<Caret /></CompanyButton>
            <SwitchLabel>In Kürze verfügbar<Switch type="checkbox" role="switch" defaultChecked /></SwitchLabel>
          </ModuleRight>
        </ModuleBar>

        <Ribbon>
          <SidePanel type="button" $side="left" aria-label="Navigation"><ListPanelIcon /></SidePanel>
          <Gap $width={5} />
          <Big width={81} icon={<TeamIcon />} label="Teamwork" />
          <Big width={81} icon={<ContactsIcon />} label="Kontakte" menu />
          <Gap $width={8} />
          <Column $width={127}>
            <Cmd icon={<TasksIcon />} label="Aufgaben" menu />
            <Cmd icon={<ActivityIcon />} label="Aktivitäten" menu />
          </Column>
          <Divider />
          <Big width={77} icon={<BookIcon />} label="Rebu" menu />
          <Column $width={109}>
            <Cmd icon={<CashIcon />} label="Kassen" menu />
            <Cmd icon={<BankIcon />} label="Banken" menu />
          </Column>
          <Column $width={141}>
            <Cmd icon={<ReceiptIcon />} label="Belegarbeitsliste" />
            <Cmd icon={<TargetIcon />} label="Buchungen" menu />
          </Column>
          <Divider />
          <Gap $width={19} />
          <Column $width={166}>
            <Cmd icon={<ReceivableIcon />} label="Forderungen" menu />
            <Cmd icon={<PayableIcon />} label="Verbindlichkeiten" menu />
            <Cmd icon={<PaymentRunIcon />} label="Zahlläufe" menu />
          </Column>
          <Column $width={119}>
            <Cmd icon={<AssetsIcon />} label="Anlagen" menu />
            <Cmd icon={<TaxIcon />} label="Umsatzsteuer" />
          </Column>
          <Big width={74} icon={<ReportIcon />} label="Berichte" menu />
          <Gap $width={7} />
          <Divider />
          <Gap $width={14} />
          <Big width={82} icon={<SlidersIcon />} label="Arbeitsplatz" menu />
          <Gap />
          <Divider />
          <CollapseButton type="button" aria-label="Menüband reduzieren"><ChevronIcon /></CollapseButton>
          <SidePanel type="button" $side="right" aria-label="Aktivitätsleiste"><PulseSmall /></SidePanel>
        </Ribbon>

        <PageBar>
          <PageTab>
            Kontoauszugdetails
            <button type="button" aria-label="Tab schließen"><Cross size={14} color="#505050" /></button>
          </PageTab>
          <PageTools>
            <ToolGroup>
              <ToolButton type="button" aria-label="Hilfe"><HelpIcon /></ToolButton>
              <ToolButton type="button" aria-label="Weitere"><DotsIcon /></ToolButton>
              <ToolButton type="button" aria-label="Aktualisieren"><ReloadIcon /></ToolButton>
              <ToolButton type="button" aria-label="Speichern"><SaveIcon /></ToolButton>
              <ToolButton type="button" aria-label="Zurück"><BackIcon /></ToolButton>
            </ToolGroup>
          </PageTools>
        </PageBar>

        <Content>
          <Summary>
            <div>
              <Facts>
                <dt>Kreditinstitut</dt>
                <dd>38070024 (Deutsche Bank PGK Bonn)</dd>
                <dt>Bankkonto</dt>
                <dd>123456789</dd>
              </Facts>
              <StatementTitle>Kontoauszug Nr. 132 vom 18.06.2012</StatementTitle>
            </div>
            <Balances>
              <dt>Anfangssaldo laut Kontoauszug</dt>
              <dd>47.219,66</dd>
              <dt>Endsaldo laut Kontoauszug</dt>
              <dd>31.309,59</dd>
              <dt />
              <dd>-</dd>
            </Balances>
          </Summary>

          <GridArea>
            <Table>
              <colgroup>
                {COLUMN_WIDTHS.map((w, i) => <col key={i} width={w} />)}
              </colgroup>
              <thead>
                <tr>
                  <PrintTh $align="center" $end={3}><button type="button" aria-label="Drucken"><PrintIcon /></button></PrintTh>
                  <Th>Buchbar</Th>
                  <Th>Buchungsdatum</Th>
                  <Th>Absender/Empfänger</Th>
                  <Th>Gegenkonto</Th>
                  <Th $align="right">
                    <SortHeader type="button">
                      Gebuchter Betrag
                      <svg width="9" height="6"><path d="M0 0H9L4.5 6Z" fill="#54708c" /></svg>
                    </SortHeader>
                  </Th>
                  <Th>Verwendungszweck</Th>
                  <Th>Zuordnungsregel</Th>
                  <Th>Zuordnungsfarbcode</Th>
                  <Th>Auszifferungen</Th>
                </tr>
              </thead>
              <tbody>
                {ENTRIES.map(([ok, name, account, amount, purpose, rule, color, ref], i) => (
                  <Row key={i}>
                    <Td />
                    <Td $align="center" $end={3}>{ok && <Check />}</Td>
                    <Td $align="right" $end={41}>18.06.2012</Td>
                    <Td>{name}</Td>
                    <Td>{account}</Td>
                    <Td $align="right" $end={7}>{amount}</Td>
                    <Td>{purpose}</Td>
                    <Td>{rule}</Td>
                    <Td><Swatch $color={COLORS[color]} />{color}</Td>
                    <Td>{ref && <CellLink href={`#${ref}`}>{ref}</CellLink>}</Td>
                  </Row>
                ))}
              </tbody>
            </Table>
            <ScrollColumn>
              <GridSearch type="button" aria-label="In Tabelle suchen"><LensIcon /></GridSearch>
              <ScrollTrack>
                <ScrollArrow />
                <Thumb />
                <ScrollArrow down />
              </ScrollTrack>
            </ScrollColumn>
            <Marker $side="left" />
            <Marker $side="right" />
          </GridArea>

          <Actions>
            <SplitButton type="button" disabled $width={194}>
              <span>Buchung bearbeiten</span>
              <span><SplitArrow /></span>
            </SplitButton>
            <Button type="button" disabled $width={104}>Stornieren</Button>
            <Button type="button" $width={107} $gap={26}>Aktiv/Inaktiv</Button>
            <Button type="button" $width={140} $gap={13}>Regeln anwenden</Button>
            <ActionLink href="#protokoll">Regelprotokoll</ActionLink>
            <ActionLink href="#regeln">Regeln bearbeiten</ActionLink>
            <ActionLink aria-disabled="true" $disabled>Regel-Schnellerstellung</ActionLink>
          </Actions>

          <ScopeRow>
            <label htmlFor="scope">Aktionen anwenden auf</label>
            <SelectBox>
              <Select id="scope" defaultValue="all">
                <option value="all">Alle Bewegungen</option>
              </Select>
              <Caret color="#000" />
            </SelectBox>
          </ScopeRow>

          <Checks>
            <CheckLabel><CheckBox type="checkbox" />Inaktive Umsatzzeilen einblenden</CheckLabel>
            <CheckLabel><CheckBox type="checkbox" />Zugeordnete Sätze ausblenden</CheckLabel>
            <CheckLabel><CheckBox type="checkbox" />Gebuchte Sätze ausblenden</CheckLabel>
          </Checks>

          <SubmitRow>
            <Button type="button" $width={104}>Buchen</Button>
          </SubmitRow>
        </Content>

        <StatusBar>
          <BoltIcon />
          <StatusDivider $space={18} />
          <SignalIcon />
          <StatusDivider $space={18} />
          <Crumbs>
            <a href="#auszuege">Kontoauszüge</a>
            <span>&gt;</span>
            <CurrentCrumb>Kontoauszugdetails</CurrentCrumb>
          </Crumbs>
          <Gap />
          <StatusDivider $space={24} />
          <StopwatchIcon />
          <Clock>00:00:00</Clock>
        </StatusBar>
      </Frame>
    </Window>
  );
}
